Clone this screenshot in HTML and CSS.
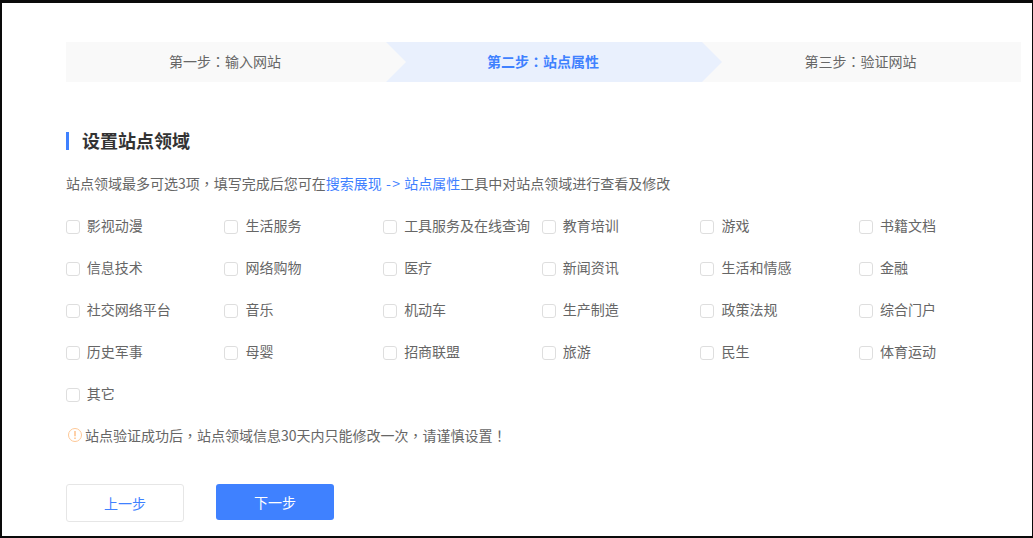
FILE: index.html
```html
<!DOCTYPE html>
<html lang="zh-CN">
<head>
<meta charset="utf-8">
<title>设置站点领域</title>
<link rel="stylesheet" href="styles.css">
</head>
<body>
<main class="frame">
  <ol class="steps">
    <li class="step">第一步<span class="punct" lang="zh-TW">：</span>输入网站</li>
    <li class="step step-active">第二步<span class="punct" lang="zh-TW">：</span>站点属性</li>
    <li class="step">第三步<span class="punct" lang="zh-TW">：</span>验证网站</li>
  </ol>
  <h2 class="title">设置站点领域</h2>
  <p class="desc">站点领域最多可选3项<span class="punct" lang="zh-TW">，</span>填写完成后您可在<a class="link" href="#">搜索展现 <span class="arrow">-&gt;</span> 站点属性</a>工具中对站点领域进行查看及修改</p>
  <div class="options">
    <label class="option"><span class="box"></span>影视动漫</label>
    <label class="option"><span class="box"></span>生活服务</label>
    <label class="option"><span class="box"></span>工具服务及在线查询</label>
    <label class="option"><span class="box"></span>教育培训</label>
    <label class="option"><span class="box"></span>游戏</label>
    <label class="option"><span class="box"></span>书籍文档</label>
    <label class="option"><span class="box"></span>信息技术</label>
    <label class="option"><span class="box"></span>网络购物</label>
    <label class="option"><span class="box"></span>医疗</label>
    <label class="option"><span class="box"></span>新闻资讯</label>
    <label class="option"><span class="box"></span>生活和情感</label>
    <label class="option"><span class="box"></span>金融</label>
    <label class="option"><span class="box"></span>社交网络平台</label>
    <label class="option"><span class="box"></span>音乐</label>
    <label class="option"><span class="box"></span>机动车</label>
    <label class="option"><span class="box"></span>生产制造</label>
    <label class="option"><span class="box"></span>政策法规</label>
    <label class="option"><span class="box"></span>综合门户</label>
    <label class="option"><span class="box"></span>历史军事</label>
    <label class="option"><span class="box"></span>母婴</label>
    <label class="option"><span class="box"></span>招商联盟</label>
    <label class="option"><span class="box"></span>旅游</label>
    <label class="option"><span class="box"></span>民生</label>
    <label class="option"><span class="box"></span>体育运动</label>
    <label class="option"><span class="box"></span>其它</label>
  </div>
  <p class="notice">
    <svg class="notice-icon" viewBox="0 0 14 14" aria-hidden="true">
      <circle cx="7" cy="7" r="6.5" fill="none" stroke="#fdc796" stroke-width="1"/>
      <path d="M7 3v5.2M7 9.6v1.3" fill="none" stroke="#fdb77a" stroke-width="1.3"/>
    </svg><span>站点验证成功后<span class="punct" lang="zh-TW">，</span>站点领域信息30天内只能修改一次<span class="punct" lang="zh-TW">，</span>请谨慎设置<span class="punct" lang="zh-TW">！</span></span>
  </p>
  <div class="actions">
    <button class="btn btn-prev" type="button">上一步</button>
    <button class="btn btn-next" type="button">下一步</button>
  </div>
</main>
</body>
</html>
```
FILE: styles.css
```css
* { box-sizing: border-box; }
html, body { margin: 0; padding: 0; }
body {
  width: 1033px;
  height: 538px;
  overflow: hidden;
  background: #fff;
  font-family: "Noto Sans CJK SC", "Liberation Sans", sans-serif;
  font-size: 14px;
  color: #666;
}
.punct {
  font-family: "Noto Sans CJK TC", "Noto Sans CJK SC", sans-serif;
}
.frame {
  height: 538px;
  border-style: solid;
  border-color: #0a0a0a;
  border-width: 3px 1px 2px 2px;
  padding: 39px 11px 0 64px;
}
.steps {
  display: grid;
  grid-template-columns: 320px 316px 1fr;
  height: 40px;
  margin: 0;
  padding: 0;
  list-style: none;
}
.step {
  position: relative;
  height: 40px;
  padding-right: 2px;
  background: #f9f9f9;
  line-height: 39px;
  text-align: center;
}
.step:not(:last-child)::after {
  content: "";
  position: absolute;
  z-index: 1;
  top: 0;
  left: 100%;
  border-style: solid;
  border-width: 20px 0 20px 20px;
  border-color: transparent transparent transparent #f9f9f9;
}
.step-active {
  background: #e9f0fd;
  color: #3f81ff;
  font-weight: 700;
}
.step-active:not(:last-child)::after {
  border-left-color: #e9f0fd;
}
.title {
  margin: 50px 0 0;
  padding-left: 13px;
  border-left: 3px solid #3f81ff;
  height: 18px;
  font-size: 18px;
  line-height: 16px;
  font-weight: 700;
  color: #333;
}
.desc {
  margin: 23px 0 0;
  line-height: 20px;
}
.link {
  color: #3f81ff;
  text-decoration: none;
}
.arrow {
  letter-spacing: 1.5px;
  margin-right: -0.5px;
  padding-left: 1px;
}
.options {
  display: grid;
  grid-template-columns: repeat(6, 158.67px);
  grid-auto-rows: 42px;
  margin: 11px 0 0 -0.2px;
  width: 952px;
}
.option {
  display: flex;
  align-items: center;
  white-space: nowrap;
}
.box {
  flex: none;
  width: 14px;
  height: 14px;
  margin: 4px 7px 0 0;
  border: 1px solid #dedede;
  border-radius: 3px;
  background: #fff;
}
.notice {
  display: flex;
  align-items: center;
  margin: 11px 0 0;
  padding-left: 2px;
  line-height: 20px;
}
.notice-icon {
  flex: none;
  width: 14px;
  height: 14px;
  margin-right: 3px;
}
.actions {
  display: flex;
  align-items: flex-start;
  gap: 32px;
  margin-top: 39px;
}
.btn {
  width: 118px;
  padding: 0;
  border-radius: 3px;
  font-family: inherit;
  font-size: 14px;
}
.btn-prev {
  height: 38px;
  background: #fff;
  border: 1px solid #e6e6e6;
  color: #3f81ff;
}
.btn-next {
  height: 36px;
  background: #3f81ff;
  border: 0;
  color: #fff;
}
```
